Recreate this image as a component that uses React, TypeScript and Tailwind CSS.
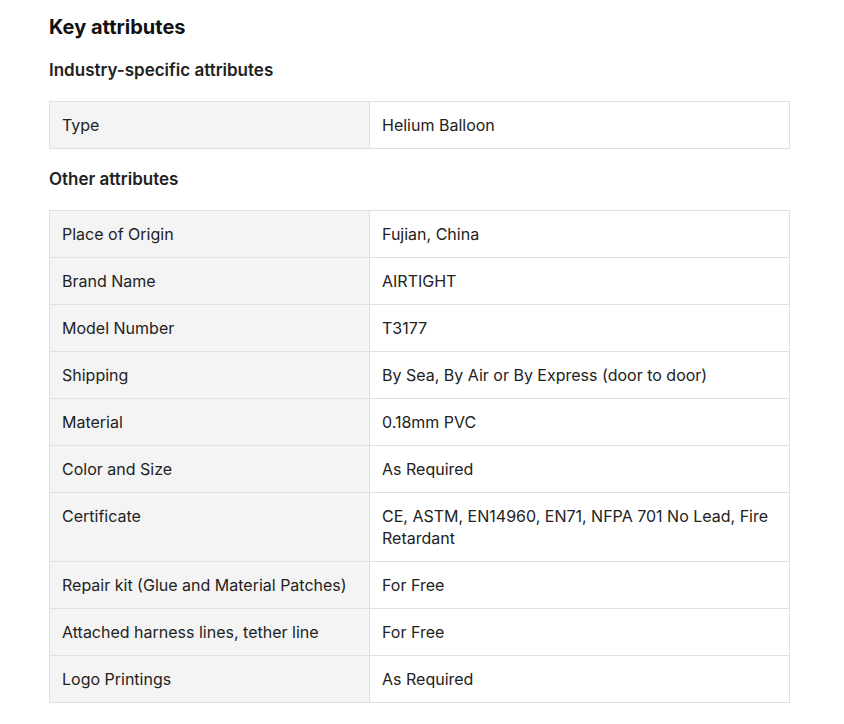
const INDUSTRY = [{ label: 'Type', value: 'Helium Balloon' }]

const OTHER = [
  { label: 'Place of Origin', value: 'Fujian, China' },
  { label: 'Brand Name', value: 'AIRTIGHT' },
  { label: 'Model Number', value: 'T3177' },
  { label: 'Shipping', value: 'By Sea, By Air or By Express (door to door)' },
  { label: 'Material', value: '0.18mm PVC' },
  { label: 'Color and Size', value: 'As Required' },
  { label: 'Certificate', value: 'CE, ASTM, EN14960, EN71, NFPA 701 No Lead, Fire Retardant' },
  { label: 'Repair kit (Glue and Material Patches)', value: 'For Free' },
  { label: 'Attached harness lines, tether line', value: 'For Free' },
  { label: 'Logo Printings', value: 'As Required' },
]

function AttrTable({ rows }: { rows: { label: string; value: string }[] }) {
  return (
    <table className="w-[741px] border-collapse table-fixed">
      <tbody>
        {rows.map((r) => (
          <tr key={r.label}>
            <td className="w-[320px] border border-[#e0e0e0] bg-[#f4f4f4] px-3 py-3 align-top text-[16px] leading-[22px] text-[#222]">
              {r.label}
            </td>
            <td className="border border-[#e0e0e0] bg-white px-3 py-3 pr-4 align-top text-[16px] leading-[22px] text-[#222]">
              {r.value}
            </td>
          </tr>
        ))}
      </tbody>
    </table>
  )
}

export default function App() {
  return (
    <div className="min-h-screen bg-white px-[49px] pt-[13px] text-[#222]" style={{ fontFamily: 'Inter, "Noto Sans", sans-serif' }}>
      <h2 className="text-[20px] leading-[28px] font-bold text-[#111]">Key attributes</h2>
      <h3 className="mt-[17px] text-[17px] leading-[24px] font-semibold">Industry-specific attributes</h3>
      <div className="mt-[19px]">
        <AttrTable rows={INDUSTRY} />
      </div>
      <h3 className="mt-[18px] text-[17px] leading-[24px] font-semibold">Other attributes</h3>
      <div className="mt-[19px]">
        <AttrTable rows={OTHER} />
      </div>
    </div>
  )
}
